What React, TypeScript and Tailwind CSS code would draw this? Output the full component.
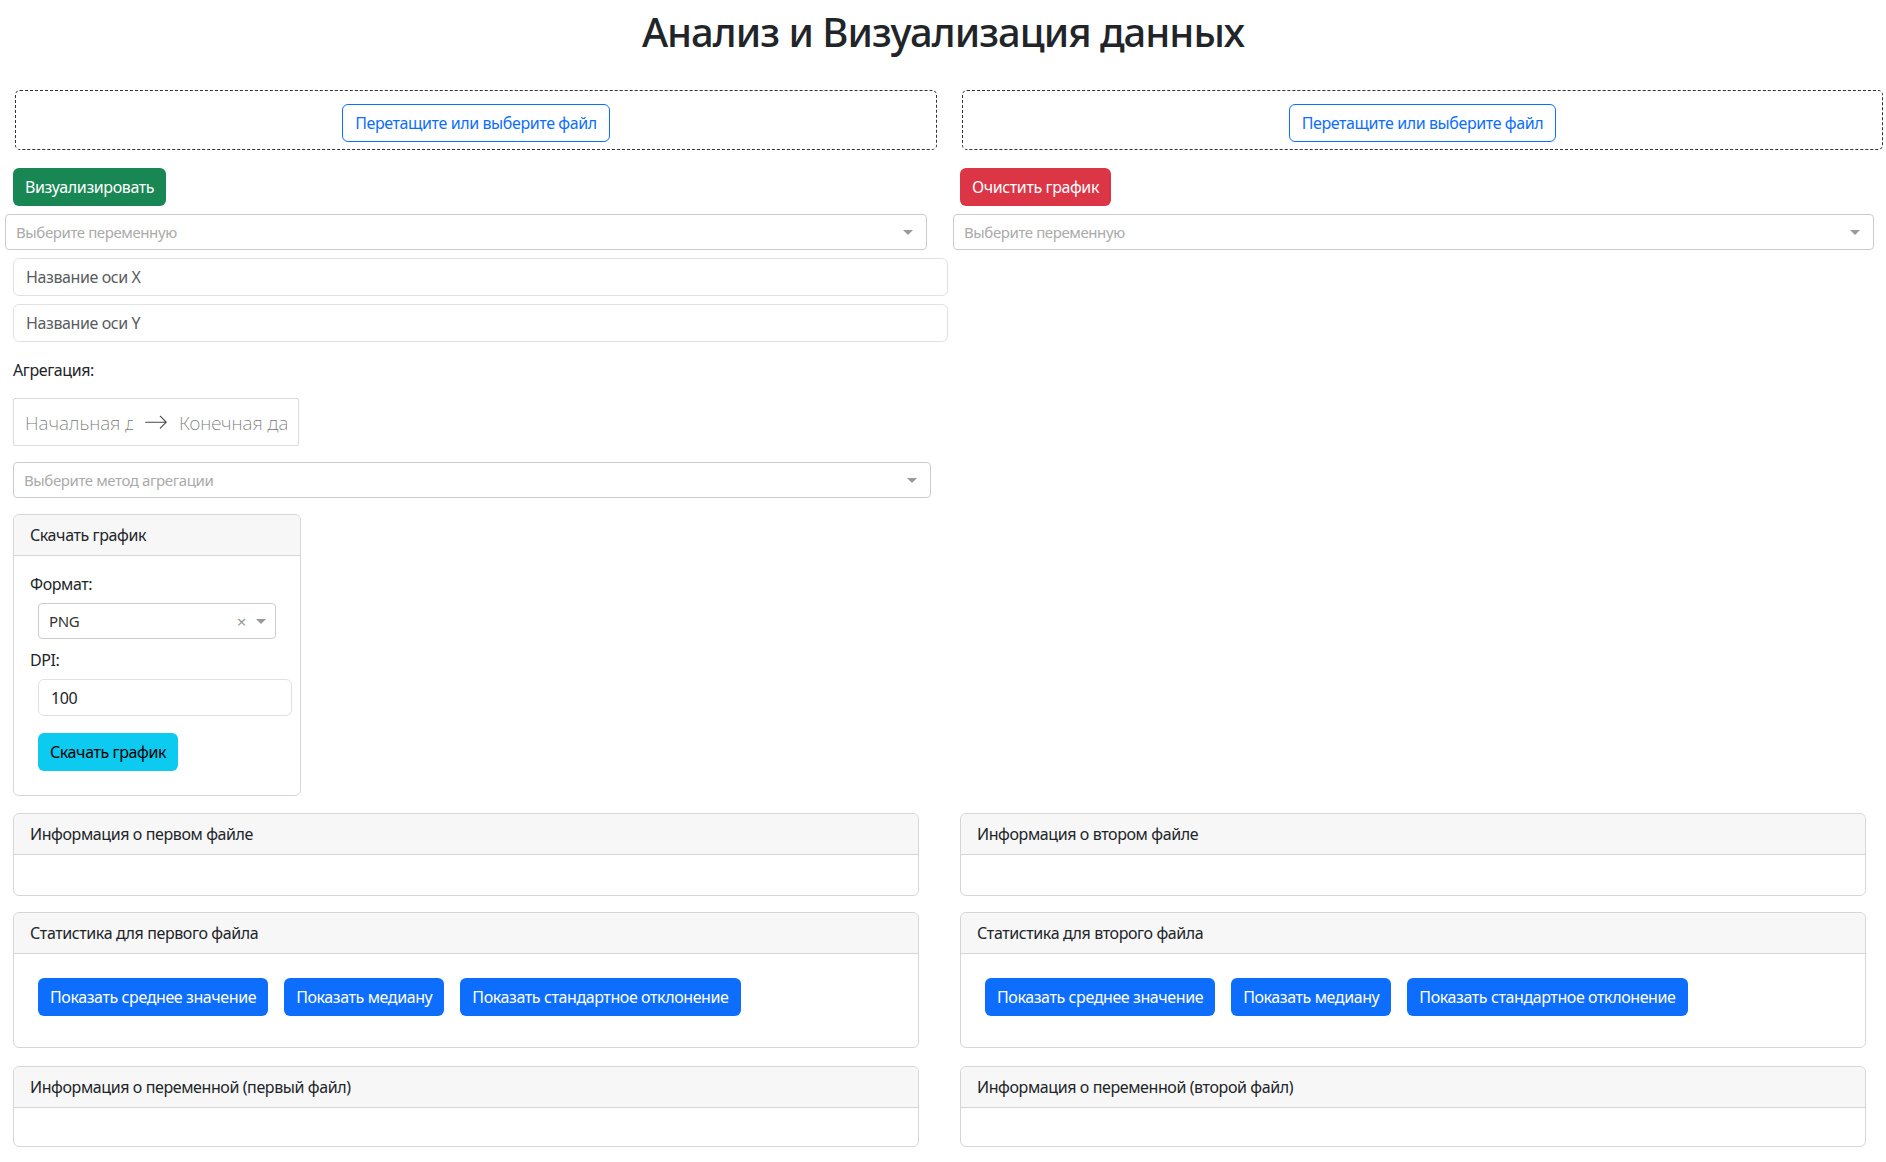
import React from "react";

const Caret = () => (
  <span className="ml-auto mr-[13px] h-0 w-0 border-x-[5px] border-t-[5px] border-x-transparent border-t-[#999]" />
);

const Dropdown = ({ text, className }: { text: string; className: string }) => (
  <div
    className={`flex h-[36px] items-center rounded-[4px] border border-[#ccc] bg-white pl-[10px] text-[15px] text-[#aaa] ${className}`}
  >
    <span>{text}</span>
    <Caret />
  </div>
);

const Card = ({
  title,
  className,
  children,
}: {
  title: string;
  className: string;
  children?: React.ReactNode;
}) => (
  <div className={`rounded-[6px] border border-[#d6d6d6] bg-white ${className}`}>
    <div className="h-[41px] rounded-t-[6px] border-b border-[#d6d6d6] bg-[#f7f7f7] px-4 py-2 leading-6">
      {title}
    </div>
    {children}
  </div>
);

const StatButtons = () => (
  <div className="flex gap-4 pl-6 pt-6">
    <button className="h-[38px] rounded-[6px] bg-[#0d6efd] px-3 text-white">Показать среднее значение</button>
    <button className="h-[38px] rounded-[6px] bg-[#0d6efd] px-3 text-white">Показать медиану</button>
    <button className="h-[38px] rounded-[6px] bg-[#0d6efd] px-3 text-white">Показать стандартное отклонение</button>
  </div>
);

const Upload = ({ className }: { className: string }) => (
  <div className={`flex h-[60px] justify-center rounded-[5px] border border-dashed border-[#333] pt-[13px] ${className}`}>
    <button className="h-[38px] rounded-[6px] border border-[#0d6efd] bg-white px-3 text-[#0d6efd]">
      Перетащите или выберите файл
    </button>
  </div>
);

export default function App() {
  return (
    <div className="min-h-[1162px] w-[1886px] bg-white pb-4 text-[16px] tracking-[-0.4px] text-[#212529] font-['Noto_Sans','Liberation_Sans',sans-serif]">
      <h1 className="pt-2 text-center text-[40px] font-medium leading-[48px] tracking-[-1px]">
        Анализ и Визуализация данных
      </h1>

      <div className="flex">
        <div className="flex w-[943px] flex-col items-start">
          <Upload className="ml-[15px] mt-[34px] w-[922px]" />
          <button className="ml-[13px] mt-[18px] h-[38px] rounded-[6px] bg-[#198754] px-3 text-white">
            Визуализировать
          </button>
          <Dropdown text="Выберите переменную" className="ml-[5px] mt-[8px] w-[922px]" />
          <input
            placeholder="Название оси X"
            className="ml-[13px] mt-[8px] h-[38px] w-[935px] rounded-[6px] border border-[#dee2e6] px-3 outline-none placeholder:text-[#595c5f]"
          />
          <input
            placeholder="Название оси Y"
            className="ml-[13px] mt-[8px] h-[38px] w-[935px] rounded-[6px] border border-[#dee2e6] px-3 outline-none placeholder:text-[#595c5f]"
          />
          <label className="ml-[13px] mt-[16px] leading-6">Агрегация:</label>
          <div className="ml-[13px] mt-[16px] flex items-center rounded-[2px] border border-[#dbdbdb] bg-white tracking-normal">
            <input
              placeholder="Начальная дата"
              className="w-[130px] px-[11px] pb-[10px] pt-[12px] text-[19px] font-extralight leading-6 outline-none placeholder:text-[#757575]"
            />
            <svg viewBox="0 0 1000 1000" className="h-[24px] w-[24px] fill-[#484848]">
              <path d="M694 242l249 250c12 11 12 21 1 32L694 773c-5 5-10 7-16 7s-11-2-16-7c-11-11-11-21 0-32l210-210H68c-13 0-23-10-23-23s10-23 23-23h806L662 275c-21-22 11-54 32-33z" />
            </svg>
            <input
              placeholder="Конечная дата"
              className="w-[130px] px-[11px] pb-[10px] pt-[12px] text-[19px] font-extralight leading-6 outline-none placeholder:text-[#757575]"
            />
          </div>
          <Dropdown text="Выберите метод агрегации" className="ml-[13px] mt-[16px] w-[918px]" />

          <Card title="Скачать график" className="ml-[13px] mt-[16px] h-[282px] w-[288px]">
            <div className="flex flex-col items-start px-4 pt-[16px]">
              <label className="leading-6">Формат:</label>
              <div className="ml-2 mt-[7px] flex h-[36px] w-[238px] items-center rounded-[4px] border border-[#ccc] pl-[10px] text-[15px] text-[#333]">
                <span>PNG</span>
                <span className="ml-auto mr-[10px] text-[17px] leading-none text-[#999]">×</span>
                <span className="mr-[9px] h-0 w-0 border-x-[5px] border-t-[5px] border-x-transparent border-t-[#999]" />
              </div>
              <label className="mt-[9px] leading-6">DPI:</label>
              <input
                defaultValue="100"
                className="ml-2 mt-[7px] h-[37px] w-[254px] rounded-[6px] border border-[#dee2e6] px-3 outline-none"
              />
              <button className="ml-2 mt-[17px] h-[38px] rounded-[6px] bg-[#0dcaf0] px-3 text-black">
                Скачать график
              </button>
            </div>
          </Card>
        </div>

        <div className="flex w-[943px] flex-col items-start">
          <Upload className="ml-[19px] mt-[34px] w-[921px]" />
          <button className="ml-[17px] mt-[18px] h-[38px] rounded-[6px] bg-[#dc3545] px-3 text-white">
            Очистить график
          </button>
          <Dropdown text="Выберите переменную" className="ml-[10px] mt-[8px] w-[921px]" />
        </div>
      </div>

      <div className="mt-[17px] flex">
        <Card title="Информация о первом файле" className="ml-[13px] h-[83px] w-[906px]" />
        <Card title="Информация о втором файле" className="ml-[41px] h-[83px] w-[906px]" />
      </div>

      <div className="mt-[16px] flex">
        <Card title="Статистика для первого файла" className="ml-[13px] h-[136px] w-[906px]">
          <StatButtons />
        </Card>
        <Card title="Статистика для второго файла" className="ml-[41px] h-[136px] w-[906px]">
          <StatButtons />
        </Card>
      </div>

      <div className="mt-[18px] flex">
        <Card title="Информация о переменной (первый файл)" className="ml-[13px] h-[81px] w-[906px]" />
        <Card title="Информация о переменной (второй файл)" className="ml-[41px] h-[81px] w-[906px]" />
      </div>
    </div>
  );
}
